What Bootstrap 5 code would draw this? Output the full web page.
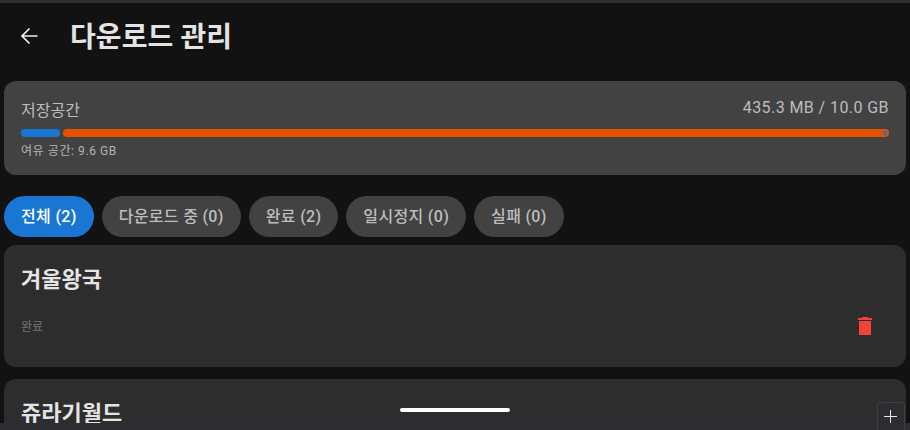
<!DOCTYPE html>
<html lang="ko">
<head>
  <meta charset="UTF-8">
  <title>다운로드 관리</title>
  <meta name="viewport" content="width=device-width, initial-scale=1">
  <link href="https://cdn.jsdelivr.net/npm/bootstrap@5.3.0/dist/css/bootstrap.min.css" rel="stylesheet">
  <style>
    html, body { height: 430px; overflow: hidden; }
    body { background: #121212; font-family: Roboto, "Noto Sans CJK KR", sans-serif; color: #e0e0e0; }
    .app-top { height: 3px; background: #2b2d30; }
    .app-head { height: 67px; padding-left: 20px; }
    .back-btn { width: 18px; height: 18px; margin-right: 32px; margin-top: -1px; }
    .page-title { font-size: 28px; font-weight: 700; line-height: 1; margin: 2px 0 0; color: #e4e4e4; letter-spacing: .1px; }
    .app-body { padding: 11px 4px 0; }
    .store-box { background: #424242; border-radius: 12px; height: 94px; padding: 18px 17px 0; }
    .store-label { font-size: 16px; line-height: 24px; color: #bdbdbd; }
    .store-size { font-size: 16px; line-height: 16px; color: #bdbdbd; letter-spacing: .42px; margin-top: 1px; }
    .store-bar { height: 8px; margin-top: 6px; gap: 3px; }
    .bar-part { height: 8px; border-radius: 4px; }
    .bar-used { background: #1976d2; width: 39px; }
    .bar-rest { background: #e65100; flex: 1; position: relative; }
    .bar-dot { position: absolute; right: 2px; top: 2px; width: 4px; height: 4px; background: #1976d2; border-radius: 1px; }
    .store-free { font-size: 12px; line-height: 14px; color: #b5b5b5; margin-top: 7px; letter-spacing: .58px; }
    .chip-row { gap: 8px; margin-top: 21px; }
    .chip-item { height: 41px; line-height: 41px; padding: 0 17px; border-radius: 20.5px; background: #424242; color: #bdbdbd; font-size: 16px; font-weight: 500; white-space: nowrap; letter-spacing: .33px; }
    .chip-on { background: #1976d2; color: #fff; }
    .movie-box { background: #2d2d2d; border-radius: 12px; margin-top: 8px; height: 122px; padding: 20px 17px 0; }
    .movie-box + .movie-box { margin-top: 12px; height: 51px; overflow: hidden; border-radius: 12px 12px 0 0; }
    .movie-name { font-size: 22px; font-weight: 700; line-height: 30px; margin: 0; color: #e4e4e4; }
    .movie-state { font-size: 12px; line-height: 14px; color: #757575; padding-top: 1px; }
    .movie-row { margin-top: 22px; padding-right: 17px; }
    .trash-icon { width: 14px; height: 18px; display: block; }
    .bottom-strip { position: absolute; left: 0; right: 0; bottom: 0; height: 7px; background: #2b2d30; }
    .home-bar { position: absolute; left: 400px; top: 408px; width: 110px; height: 4px; border-radius: 2px; background: #fff; }
    .plus-btn { position: absolute; left: 877px; top: 402px; width: 28px; height: 28px; background: #2b2d30; border: 1px solid #3d3f43; border-bottom: 0; border-radius: 4px 4px 0 0; }
    .plus-btn svg { display: block; margin: 7px 0 0 6px; }
  </style>
</head>
<body>
  <div class="app-top"></div>
  <header class="app-head d-flex align-items-center">
    <svg class="back-btn" viewBox="0 0 18 18" fill="none" stroke="#f0f0f0" stroke-width="1.7">
      <path d="M17.500 9H2M9.500 1.500 2 9l7.500 7.500"/>
    </svg>
    <h1 class="page-title">다운로드 관리</h1>
  </header>
  <main class="app-body">
    <section class="store-box">
      <div class="d-flex justify-content-between">
        <span class="store-label">저장공간</span>
        <span class="store-size">435.3 MB / 10.0 GB</span>
      </div>
      <div class="store-bar d-flex">
        <div class="bar-part bar-used"></div>
        <div class="bar-part bar-rest"><span class="bar-dot"></span></div>
      </div>
      <div class="store-free">여유 공간: 9.6 GB</div>
    </section>
    <div class="chip-row d-flex">
      <div class="chip-item chip-on">전체 (2)</div>
      <div class="chip-item">다운로드 중 (0)</div>
      <div class="chip-item">완료 (2)</div>
      <div class="chip-item">일시정지 (0)</div>
      <div class="chip-item">실패 (0)</div>
    </div>
    <section class="movie-box">
      <h2 class="movie-name">겨울왕국</h2>
      <div class="movie-row d-flex justify-content-between align-items-center">
        <span class="movie-state">완료</span>
        <svg class="trash-icon" viewBox="0 0 14 18" fill="#f44336">
          <path d="M4.500 0h5l1 1H14v2H0V1h3.500zM1 4h12v14H1z"/>
        </svg>
      </div>
    </section>
    <section class="movie-box">
      <h2 class="movie-name">쥬라기월드</h2>
    </section>
  </main>
  <div class="bottom-strip"></div>
  <div class="home-bar"></div>
  <div class="plus-btn">
    <svg width="13" height="13" viewBox="0 0 13 13" stroke="#e8e8e8" stroke-width="1"><path d="M6.500 0v13M0 6.500h13"/></svg>
  </div>
  <script src="https://cdn.jsdelivr.net/npm/bootstrap@5.3.0/dist/js/bootstrap.bundle.min.js"></script>
</body>
</html>
